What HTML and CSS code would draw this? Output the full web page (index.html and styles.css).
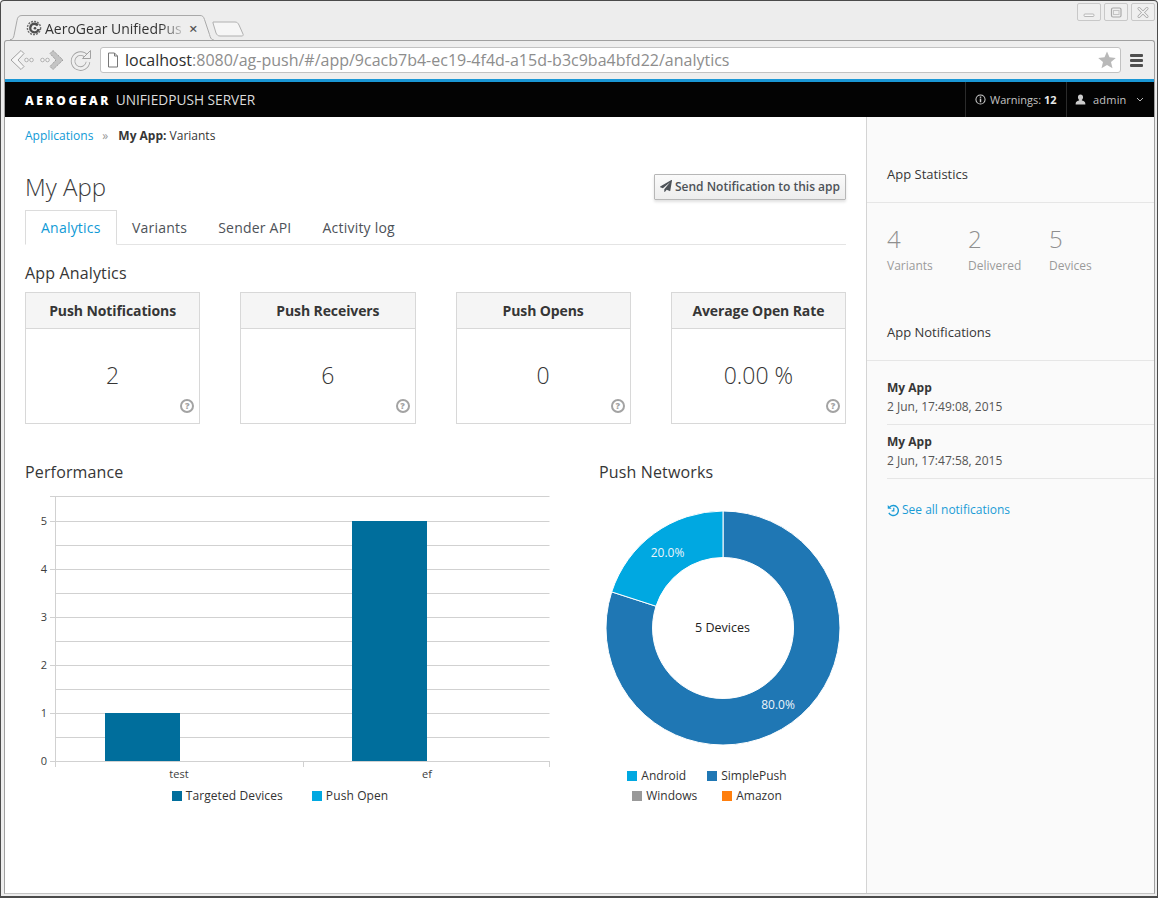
FILE: index.html
```html
<!DOCTYPE html>
<html lang="en">
<head>
<meta charset="utf-8">
<title>AeroGear UnifiedPush Server</title>
<link rel="stylesheet" href="styles.css">
</head>
<body>
<div class="window">
  <div class="tabstrip">
    <div class="tab">
      <svg class="tab-shape" viewBox="0 0 208 25" width="208" height="25"><path d="M0 24.500h1c1.500 0 2.500-1.500 3-4l3-15c.5-3.500 2-5 5-5h178c2.500 0 3.500 1 4.500 4l5 15c.7 3 2 5 3 5h1" fill="#eeeeee" stroke="#a9a9a9"/></svg>
      <svg class="favicon" viewBox="0 0 16 16" width="16" height="16"><circle cx="8" cy="8" r="6.600" fill="none" stroke="#6a6a6a" stroke-width="1.400" stroke-dasharray="2 1.100"/><path d="M9 2.500a5.500 5.500 0 1 0 5 6.500h-2.700a3 3 0 1 1-2.300-3.800c1 .1 1.500.6 2 1l1.800-1.800A5.500 5.500 0 0 0 9 2.500z" fill="#4f4f4f"/><circle cx="9" cy="8.200" r="1.300" fill="#4f4f4f"/></svg>
      <span class="tab-title">AeroGear UnifiedPus</span>
      <span class="tab-close">×</span>
    </div>
    <svg class="newtab" viewBox="0 0 32 16" width="32" height="16"><path d="M1 1h22c2 0 3 1 4 3l4 9c.5 1 0 2-1 2H8c-2 0-3-1-4-3L1 2z" fill="#f6f6f6" stroke="#b0b0b0"/></svg>
    <div class="winctl">
      <span class="winbtn"><svg viewBox="0 0 22 17" width="22" height="17"><rect x="6" y="10" width="10" height="2.500" rx="1" fill="#f8f8f8" stroke="#a8a8a8" stroke-width=".8"/></svg></span>
      <span class="winbtn"><svg viewBox="0 0 22 17" width="22" height="17"><rect x="6.500" y="4" width="9.500" height="9" rx="1.500" fill="none" stroke="#a8a8a8" stroke-width="1.200"/><rect x="8.500" y="6.500" width="5.500" height="4" fill="none" stroke="#c4c4c4"/></svg></span>
      <span class="winbtn"><svg viewBox="0 0 22 17" width="22" height="17"><path d="M7 4.500l8 8M15 4.500l-8 8" stroke="#a8a8a8" stroke-width="3" stroke-linecap="round"/><path d="M7 4.500l8 8M15 4.500l-8 8" stroke="#f6f6f6" stroke-width="1.400" stroke-linecap="round"/></svg></span>
    </div>
  </div>

  <div class="frame">
    <div class="toolbar">
      <svg class="nav-icon" viewBox="0 0 26 22" width="26" height="22"><path d="M12 1.500L2 11l10 9.500 3-3L9 11l6-6.500z" fill="#f6f6f6" stroke="#a2a2a2"/><circle cx="17.500" cy="11" r="1.800" fill="#f4f4f4" stroke="#a2a2a2" stroke-width=".8"/><circle cx="22.500" cy="11" r="1.800" fill="#f4f4f4" stroke="#a2a2a2" stroke-width=".8"/></svg>
      <svg class="nav-icon" viewBox="0 0 26 22" width="26" height="22"><path d="M14 1.500L24 11l-10 9.500-3-3 6-6.500-6-6.500z" fill="#c4c4c4" stroke="#999" stroke-dasharray="1.500 .8"/><circle cx="8.500" cy="11" r="1.800" fill="#f4f4f4" stroke="#a2a2a2" stroke-width=".8"/><circle cx="3.500" cy="11" r="1.800" fill="#f4f4f4" stroke="#a2a2a2" stroke-width=".8"/></svg>
      <svg class="nav-icon reload" viewBox="0 0 22 22" width="22" height="22"><path d="M16.500 7.500A7.500 7.500 0 1 0 18 13" fill="none" stroke="#a2a2a2" stroke-width="4.500"/><path d="M16.500 7.500A7.500 7.500 0 1 0 18 13" fill="none" stroke="#efefef" stroke-width="2.800"/><path d="M12.500 9.500L20.500 1.500v8z" fill="#efefef" stroke="#a2a2a2"/></svg>
      <div class="omnibox">
        <svg class="page-icon" viewBox="0 0 12 16" width="12" height="16"><path d="M1.500 1h6l3 3v11h-9z" fill="#fff" stroke="#777"/><path d="M7.500 1v3h3" fill="none" stroke="#777"/></svg>
        <span class="url"><span class="url-host">localhost</span>:8080/ag-push/#/app/9cacb7b4-ec19-4f4d-a15d-b3c9ba4bfd22/analytics</span>
        <svg class="star" viewBox="0 0 18 18" width="18" height="18"><path d="M9 .5l2.500 5.800 6.300.6-4.800 4.100 1.500 6.200L9 13.900l-5.500 3.300L5 11 .2 6.900l6.300-.6z" fill="#b9b9b9"/></svg>
      </div>
      <span class="hamburger"><i></i><i></i><i></i></span>
    </div>

    <div class="accent"></div>

    <header class="navbar">
      <div class="brand"><b>AEROGEAR</b> UNIFIEDPUSH SERVER</div>
      <div class="nav-utils">
        <div class="nav-item warn">
          <svg viewBox="0 0 12 12" width="11" height="11"><circle cx="6" cy="6" r="5" fill="none" stroke="#ccc" stroke-width="1.100"/><rect x="5.200" y="5" width="1.600" height="4" fill="#ccc"/><rect x="5.200" y="2.800" width="1.600" height="1.400" fill="#ccc"/></svg>
          <span>Warnings: <b>12</b></span>
        </div>
        <div class="nav-item user">
          <svg viewBox="0 0 12 12" width="11" height="11"><path d="M6 .5c1.800 0 2.800 1.300 2.800 3 0 1.200-.6 2.300-1.300 2.900v.8c1.800.5 3.800 1 3.800 3.300v1H.7v-1c0-2.300 2-2.800 3.800-3.300v-.8c-.7-.6-1.300-1.700-1.300-2.900 0-1.700 1-3 2.800-3z" fill="#ccc"/></svg>
          <span>admin</span>
          <svg class="caret" viewBox="0 0 8 5" width="8" height="5"><path d="M1 1l3 3 3-3" fill="none" stroke="#bbb"/></svg>
        </div>
      </div>
    </header>

    <div class="page">
      <main class="main">
        <nav class="crumbs"><a>Applications</a><span class="sep">»</span><span><b>My App:</b> Variants</span></nav>
        <div class="title-row">
          <h1>My App</h1>
          <button class="send">
            <svg viewBox="0 0 1792 1792" width="12" height="12"><path d="M1764 11q33 24 27 64l-256 1536q-5 29-32 45-14 8-31 8-11 0-24-5l-453-185-242 295q-18 23-49 23-13 0-22-4-19-7-30.500-23.500t-11.500-36.500v-349l864-1059-1069 925-395-162q-37-14-40-55-2-40 32-59l1664-960q15-9 32-9 20 0 36 11z" fill="#4d5258"/></svg>
            <span>Send Notification to this app</span>
          </button>
        </div>
        <div class="tabs">
          <a class="pill active">Analytics</a>
          <a class="pill">Variants</a>
          <a class="pill">Sender API</a>
          <a class="pill">Activity log</a>
        </div>
        <h2 class="sub analytics-h">App Analytics</h2>
        <section class="cards">
          <article class="card"><h3>Push Notifications</h3><div class="card-body">2<span class="help">?</span></div></article>
          <article class="card"><h3>Push Receivers</h3><div class="card-body">6<span class="help">?</span></div></article>
          <article class="card"><h3>Push Opens</h3><div class="card-body">0<span class="help">?</span></div></article>
          <article class="card"><h3>Average Open Rate</h3><div class="card-body">0.00 %<span class="help">?</span></div></article>
        </section>
        <section class="charts">
          <div class="perf">
            <h2 class="sub">Performance</h2>
            <svg class="bar-chart" viewBox="25 490 530 295" width="530" height="295">
              <g stroke="#d1d1d1" stroke-width="1">
                <path d="M50 496.500H549.500M50 521.500H549.500M55 545.500H549.500M50 569.500H549.500M55 593.500H549.500M50 617.500H549.500M55 641.500H549.500M50 665.500H549.500M55 689.500H549.500M50 713.500H549.500M55 737.500H549.500M50 761.500H549.500"/>
                <path d="M55.500 496V767M303.500 761V767M549.500 761V767"/>
              </g>
              <rect x="105" y="713" width="75" height="48" fill="#006e9c"/>
              <rect x="352" y="521" width="75" height="240" fill="#006e9c"/>
              <g class="tick-y">
                <text x="47" y="525">5</text><text x="47" y="573">4</text><text x="47" y="621">3</text><text x="47" y="669">2</text><text x="47" y="717">1</text><text x="47" y="765">0</text>
              </g>
              <g class="tick-x">
                <text x="179" y="778">test</text><text x="427" y="778">ef</text>
              </g>
            </svg>
            <div class="legend legend-perf">
              <span class="key"><i class="sw c-dark"></i>Targeted Devices</span>
              <span class="key"><i class="sw c-light"></i>Push Open</span>
            </div>
          </div>
          <div class="networks">
            <h2 class="sub">Push Networks</h2>
            <svg class="donut" viewBox="599 505 247 250" width="247" height="250">
              <path d="M723 511A117 117 0 1 1 611.700 591.900L656 606.200A70.500 70.500 0 1 0 723 557.500Z" fill="#1f77b4" stroke="#fff"/>
              <path d="M611.700 591.900A117 117 0 0 1 723 511V557.500A70.500 70.500 0 0 0 656 606.200Z" fill="#00a8e1" stroke="#fff"/>
              <text class="pct" x="667.500" y="557">20.0%</text>
              <text class="pct" x="778" y="709">80.0%</text>
              <text class="center" x="722.500" y="632">5 Devices</text>
            </svg>
            <div class="legend legend-net">
              <span class="key"><i class="sw c-light"></i>Android</span>
              <span class="key"><i class="sw c-blue"></i>SimplePush</span>
            </div>
            <div class="legend legend-net second">
              <span class="key"><i class="sw c-gray"></i>Windows</span>
              <span class="key"><i class="sw c-orange"></i>Amazon</span>
            </div>
          </div>
        </section>
      </main>

      <aside class="side">
        <h4 class="side-h first">App Statistics</h4>
        <div class="stats">
          <div class="stat"><strong>4</strong><span>Variants</span></div>
          <div class="stat"><strong>2</strong><span>Delivered</span></div>
          <div class="stat"><strong>5</strong><span>Devices</span></div>
        </div>
        <h4 class="side-h">App Notifications</h4>
        <ul class="notes">
          <li><b>My App</b><span>2 Jun, 17:49:08, 2015</span></li>
          <li><b>My App</b><span>2 Jun, 17:47:58, 2015</span></li>
        </ul>
        <a class="see-all">
          <svg viewBox="0 0 14 14" width="13" height="13"><path d="M3 3.200A5.400 5.400 0 1 1 2 9.500" fill="none" stroke="#1a9cd6" stroke-width="1.500"/><path d="M.8 1v4.200H5z" fill="#1a9cd6"/><path d="M7.300 4v3.500H5" fill="none" stroke="#1a9cd6" stroke-width="1.300"/></svg>
          See all notifications
        </a>
      </aside>
    </div>
  </div>
</div>
</body>
</html>
```

FILE: styles.css
```css
* { box-sizing: border-box; }
html, body { margin: 0; height: 100%; overflow: hidden; }
body { font-family: "Open Sans", "Noto Sans", sans-serif; color: #363636; background: #fff; }

.window {
  width: 1158px; height: 898px;
  display: flex; flex-direction: column;
  background: #ededed;
  border: 1px solid #4b4b4b;
  border-bottom-width: 2px;
  border-radius: 4px 4px 0 0;
  padding: 0 2px 2px 3px;
}

.tabstrip { height: 39px; display: flex; align-items: flex-end; padding-left: 6px; flex: none; }
.tab { position: relative; width: 208px; height: 24px; display: flex; align-items: center; padding: 0 0 0 22px; }
.tab-shape { position: absolute; left: 0; top: -1px; }
.favicon { position: absolute; left: 16px; top: 4px; }
.tab-title {
  position: relative; width: 136px; margin-left: 13px; white-space: nowrap;
  font-size: 14px; color: #333; line-height: 22px; padding-top: 1px;
  -webkit-mask-image: linear-gradient(to right, #000 85%, rgba(0,0,0,.25));
  mask-image: linear-gradient(to right, #000 85%, rgba(0,0,0,.25));
}
.tab-close { position: relative; margin-left: 8px; font-size: 15px; font-weight: 600; color: #555; line-height: 20px; }
.newtab { margin: 0 0 3px -6px; flex: none; }
.winctl { margin-left: auto; align-self: flex-start; margin-top: 2px; display: flex; gap: 3px; }
.winbtn { width: 24px; height: 18px; border: 1px solid #c8c8c8; border-radius: 2px; background: #efefef; display: flex; align-items: center; justify-content: center; }

.frame { flex: 1; min-height: 0; display: flex; flex-direction: column; border: 1px solid #a0a0a0; border-bottom-color: #c4c4c4; border-radius: 3px 3px 0 0; background: #eeeeee; }
.toolbar { height: 38px; display: flex; align-items: center; padding: 0 0 0 4px; flex: none; }
.nav-icon { flex: none; margin-right: 4px; }
.reload { margin: 0 8px 0 1px; }
.omnibox { flex: none; width: 1021px; height: 26px; background: #fff; border: 1px solid #c2c2c2; border-radius: 3px; display: flex; align-items: center; padding: 0 4px 0 6px; }
.page-icon { flex: none; margin-right: 6px; }
.url { font-size: 16px; color: #8d8d8d; white-space: nowrap; flex: 1; line-height: 24px; }
.url-host { color: #2e2e2e; }
.star { flex: none; }
.hamburger { margin-left: 9px; width: 13px; display: flex; flex-direction: column; gap: 2px; }
.hamburger i { display: block; height: 3px; background: #4e4e4e; border-radius: 1px; }

.accent { height: 3px; background: #1a97d5; flex: none; }

.navbar { height: 35px; background: #030303; color: #e4e4e4; display: flex; justify-content: space-between; align-items: stretch; flex: none; }
.brand { padding-left: 20px; font-size: 13.700px; line-height: 35px; color: #dcdcdc; }
.brand b { color: #fff; font-weight: 800; letter-spacing: 2.600px; margin-right: 1px; font-size: 12px; }
.nav-utils { display: flex; }
.nav-item { display: flex; align-items: center; gap: 3px; border-left: 1px solid #2b2b2b; font-size: 11px; color: #c4c4c4; height: 35px; }
.nav-item b { color: #e8e8e8; font-weight: 700; }
.warn { width: 101px; padding-left: 9px; gap: 4px; }
.user { width: 88px; padding-left: 8px; gap: 7px; letter-spacing: .2px; }
.caret { margin-left: 2px; }

.page { flex: 1; min-height: 0; display: flex; background: #fff; }
.main { flex: none; width: 861px; padding: 0 20px; }
.crumbs { margin-top: 10px; height: 18px; display: flex; font-size: 12px; line-height: 18px; color: #363636; }
.crumbs a { color: #0f9ad6; }
.sep { margin: 0 10px 0 9px; color: #999; }
.crumbs b { font-weight: 700; }
.title-row { margin-top: 29px; height: 26px; display: flex; justify-content: space-between; align-items: center; }
h1 { margin: 0; font-size: 24px; font-weight: 300; color: #3b3b3b; line-height: 28px; }
.send {
  height: 26px; width: 192px; padding: 0 0 2px; display: flex; align-items: center; justify-content: center; gap: 3px;
  font: 600 12px "Open Sans", sans-serif; color: #4d5258;
  background: linear-gradient(#fafafa, #ededed);
  border: 1px solid #b7b7b7; border-radius: 1px;
  box-shadow: 0 2px 3px rgba(0,0,0,.12);
}
.tabs { margin-top: 10px; height: 35px; display: flex; border-bottom: 1px solid #e4e4e4; }
.pill { height: 35px; padding: 0 15px 0 14px; line-height: 34px; font-size: 14px; letter-spacing: .22px; color: #4d5258; border: 1px solid transparent; }
.pill.active { color: #0f9ad6; background: #fff; border-color: #dcdcdc; border-bottom-color: #fff; width: 92px; padding-left: 15px; }
.sub { margin: 0; font-size: 16px; font-weight: 400; line-height: 22px; letter-spacing: .15px; color: #363636; }
.analytics-h { margin-top: 17px; }
.cards { margin-top: 8px; display: grid; grid-template-columns: repeat(4, 1fr); column-gap: 40px; }
.card { height: 132px; border: 1px solid #d8d8d8; display: flex; flex-direction: column; }
.card h3 { margin: 0; height: 36px; flex: none; background: #f5f5f5; border-bottom: 1px solid #d8d8d8; font-size: 14px; font-weight: 700; line-height: 36px; letter-spacing: -.1px; text-align: center; color: #363636; }
.card-body { position: relative; flex: 1; display: flex; align-items: center; justify-content: center; padding-bottom: 2px; font-size: 23px; font-weight: 300; color: #363636; }
.help { position: absolute; right: 5px; bottom: 10px; width: 14px; height: 14px; border: 2px solid #a3a3a3; border-radius: 50%; font-size: 9px; font-weight: 800; line-height: 10px; text-align: center; color: #a3a3a3; }

.charts { margin-top: 37px; display: flex; justify-content: space-between; }
.perf { width: 530px; }
.bar-chart { display: block; margin-top: 7px; }
.tick-y text { font-size: 11px; fill: #3d3d3d; text-anchor: end; }
.tick-x text { font-size: 11px; fill: #3d3d3d; text-anchor: middle; }
.networks { width: 247px; }
.donut { display: block; margin-top: 22px; }
.pct { font-size: 12px; fill: #eaf4fb; text-anchor: middle; }
.center { font-size: 12.500px; fill: #222; text-anchor: middle; }
.legend { display: flex; justify-content: center; font-size: 12px; line-height: 16px; color: #333; }
.legend-perf { width: 510px; gap: 29px; margin-top: 3px; letter-spacing: .1px; }
.legend-net { width: 216px; gap: 21px; margin-top: 13px; }
.legend-net.second { gap: 25px; margin-top: 4px; }
.key { display: flex; align-items: center; gap: 4px; }
.sw { width: 10px; height: 10px; display: block; flex: none; }
.c-dark { background: #006e9c; }
.c-light { background: #00a8e1; }
.c-blue { background: #1f77b4; }
.c-gray { background: #999; }
.c-orange { background: #ff7f0e; }

.side { flex: 1; background: #fafafa; border-left: 1px solid #d4d4d4; font-size: 12px; }
.side-h { margin: 0; padding: 19px 0 0 20px; height: 57px; font-size: 13px; font-weight: 400; line-height: 18px; color: #363636; border-bottom: 1px solid #e6e6e6; }
.side-h.first { height: 86px; padding-top: 48px; }
.stats { height: 101px; padding: 20px 0 0 20px; display: flex; }
.stat { width: 81px; display: flex; flex-direction: column; color: #9a9a9a; }
.stat strong { font-size: 24px; font-weight: 300; line-height: 32px; color: #8f8f8f; }
.stat span { font-size: 12px; line-height: 18px; margin-top: 2px; }
.notes { list-style: none; margin: 0 0 0 20px; padding: 0; }
.notes li { height: 54px; padding-top: 8px; border-bottom: 1px solid #e6e6e6; display: flex; flex-direction: column; }
.notes li:first-child { height: 64px; padding-top: 18px; }
.notes b { font-weight: 700; line-height: 18px; color: #363636; }
.notes span { line-height: 18px; margin-top: 1px; color: #555; }
.see-all { display: flex; align-items: center; gap: 2px; margin: 22px 0 0 20px; color: #1a9cd6; line-height: 18px; }
```
